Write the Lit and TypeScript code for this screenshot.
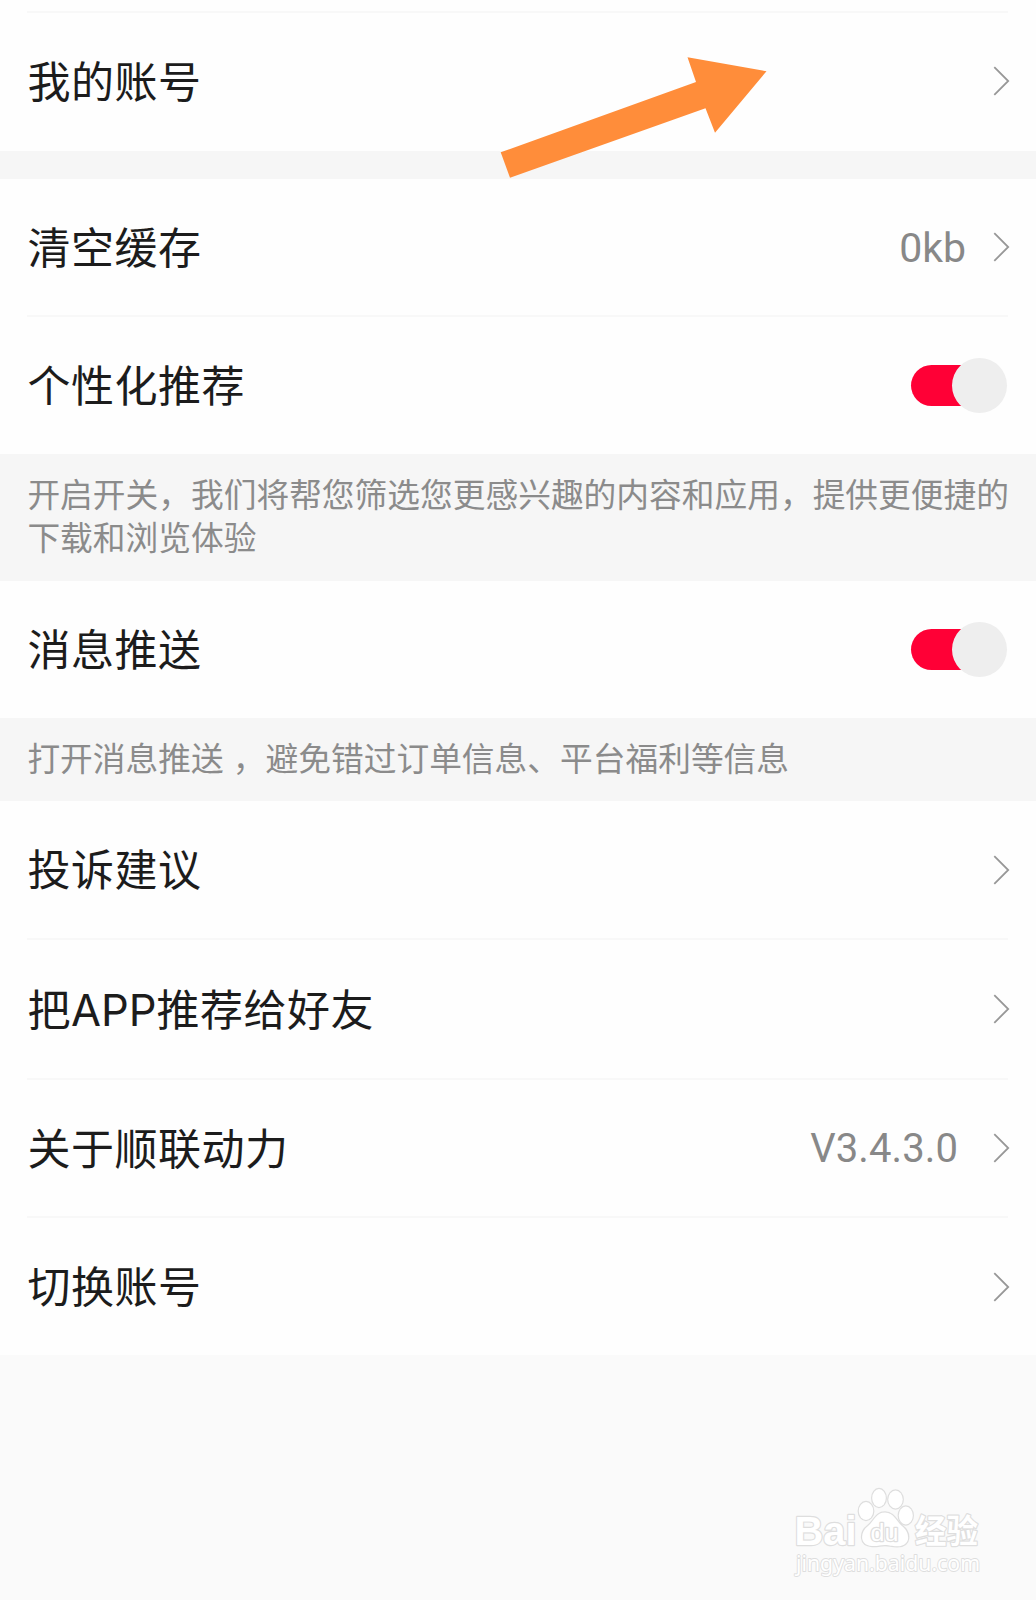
import { LitElement, html, css, svg, nothing } from "lit";
import { customElement, property } from "lit/decorators.js";

@customElement("chevron-icon")
class ChevronIcon extends LitElement {
  static styles = css`
    :host { display: block; width: 17px; height: 30px; }
    .icon { display: block; }
  `;
  render() {
    return html`<svg class="icon" width="17" height="30" viewBox="0 0 17 30" fill="none" stroke="#989898" stroke-width="1.8">
      <path d="M1.3 1.2 15.2 15 1.3 28.8" />
    </svg>`;
  }
}

@customElement("toggle-switch")
class ToggleSwitch extends LitElement {
  static styles = css`
    :host { display: flex; align-items: center; width: 96px; height: 56px; }
    .track { width: 70px; height: 41px; border-radius: 21px; background: #ff0036; }
    .knob { width: 55px; height: 55px; margin-left: -29px; border-radius: 50%; background: #eeeeee; flex: none; }
  `;
  render() {
    return html`<div class="track"></div><div class="knob"></div>`;
  }
}

@customElement("setting-row")
class SettingRow extends LitElement {
  @property() label = "";
  @property() value = "";
  @property() kind = "link";

  static styles = css`
    :host { display: block; background: #fefefe; }
    .row { box-sizing: border-box; height: 100%; padding: 0 26px 0 27.5px; display: flex; align-items: center; }
    .label { flex: 1; padding-bottom: 5px; font-size: 43px; letter-spacing: 0.5px; line-height: 60px; color: #1c1c1c; white-space: nowrap; }
    .latin { font-family: Inter, "Noto Sans CJK SC", sans-serif; font-size: 43.5px; font-weight: 400; letter-spacing: 0; line-height: 1; }
    .value { font-family: Roboto, "Noto Sans CJK SC", sans-serif; font-size: 41px; line-height: 60px; color: #888888; margin-right: 27px; padding-top: 1px; }
    .version { font-size: 40px; letter-spacing: 0.1px; margin-right: 35px; padding-top: 2px; }
    .switch { margin-right: 3px; }
  `;
  render() {
    const parts = this.label.split(/([A-Z]+)/);
    return html`<div class="row">
      <div class="label">${parts.map((p) => (/^[A-Z]+$/.test(p) ? html`<span class="latin">${p}</span>` : p))}</div>
      ${this.value ? html`<div class="value ${this.value.startsWith("V") ? "version" : ""}">${this.value}</div>` : nothing}
      ${this.kind === "switch" ? html`<toggle-switch class="switch"></toggle-switch>` : html`<chevron-icon></chevron-icon>`}
    </div>`;
  }
}

@customElement("app-root")
class AppRoot extends LitElement {
  static styles = css`
    :host {
      display: block; position: relative; width: 1036px; height: 1600px; overflow: hidden;
      background: #fafafa; font-family: "Noto Sans CJK SC", sans-serif;
    }
    .list { display: flex; flex-direction: column; }
    .top { height: 11px; background: #fefefe; }
    .line { height: 2px; background: linear-gradient(#f8f8f8, #f8f8f8) 27px 0 / 981px 2px no-repeat #fefefe; }
    .gap { height: 28px; background: #f6f6f6; }
    .first { box-sizing: border-box; height: 138px; padding-bottom: 2px; }
    .r138 { height: 138px; }
    .r137 { height: 137px; }
    .r136 { height: 136px; }
    .note { box-sizing: border-box; background: #f6f6f6; color: #8b8b8b; font-size: 32.72px; line-height: 43.5px; padding-left: 27.4px; white-space: nowrap; }
    .tall { height: 127px; padding-top: 16.5px; }
    .short { height: 83px; padding-top: 16.5px; }
    .space { letter-spacing: 1.8px; }
    .arrow { position: absolute; left: 490px; top: 50px; }
    .mark { position: absolute; left: 780px; top: 1480px; }
    .brand { font-family: "Liberation Sans", sans-serif; font-weight: 700; }
    .du { font-family: "Liberation Sans", sans-serif; font-weight: 400; }
    .cjk { font-family: "Noto Sans CJK SC", sans-serif; font-weight: 700; }
    .url { font-family: "Noto Sans", sans-serif; }
  `;

  watermark() {
    return svg`<g fill="#ffffff" stroke="#dedede" stroke-width="2.4" stroke-linejoin="round" paint-order="stroke">
      <text class="brand" x="14.5" y="65" font-size="41" textLength="62" lengthAdjust="spacingAndGlyphs">Bai</text>
      <ellipse cx="86" cy="31" rx="7.2" ry="9" />
      <ellipse cx="99" cy="18" rx="6.8" ry="9" />
      <ellipse cx="115.5" cy="19.5" rx="7.2" ry="9" />
      <ellipse cx="125.8" cy="35.5" rx="7" ry="9" />
      <path d="M105 32.5C114 32.5 116 41 122 46C130 52 132 66 117 66.3C111 66.3 110 65 105 65C100 65 98 66.3 92 66C79 65 80 52 88 46C95 40 96 32.5 105 32.5Z" />
      <text class="du" x="90.5" y="61" font-size="23" textLength="28" lengthAdjust="spacingAndGlyphs">du</text>
      <text class="cjk" x="135" y="63" font-size="33" textLength="63" lengthAdjust="spacingAndGlyphs">经验</text>
      <text class="url" x="16" y="91.3" font-size="21" stroke-width="1.8" textLength="184" lengthAdjust="spacingAndGlyphs">jingyan.baidu.com</text>
    </g>`;
  }

  render() {
    return html`
      <div class="list">
        <div class="top"></div>
        <div class="line"></div>
        <setting-row class="first" label="我的账号"></setting-row>
        <div class="gap"></div>
        <setting-row class="r136" label="清空缓存" value="0kb"></setting-row>
        <div class="line"></div>
        <setting-row class="r137" label="个性化推荐" kind="switch"></setting-row>
        <div class="note tall">开启开关，我们将帮您筛选您更感兴趣的内容和应用，提供更便捷的<br />下载和浏览体验</div>
        <setting-row class="r137" label="消息推送" kind="switch"></setting-row>
        <div class="note short">打开消息推送<span class="space"> </span>，避免错过订单信息、平台福利等信息</div>
        <setting-row class="r137" label="投诉建议"></setting-row>
        <div class="line"></div>
        <setting-row class="r138" label="把APP推荐给好友"></setting-row>
        <div class="line"></div>
        <setting-row class="r136" label="关于顺联动力" value="V3.4.3.0"></setting-row>
        <div class="line"></div>
        <setting-row class="r137" label="切换账号"></setting-row>
      </div>
      <svg class="arrow" width="290" height="140" viewBox="490 50 290 140">
        <path fill="#ff8d3a" d="M500.7 152.3 696 82 687.5 57.3 766.5 71.2 715 132.8 705.5 108.2 510 177.8Z" />
      </svg>
      <svg class="mark" width="220" height="110" viewBox="0 0 220 110">${this.watermark()}</svg>
    `;
  }
}
